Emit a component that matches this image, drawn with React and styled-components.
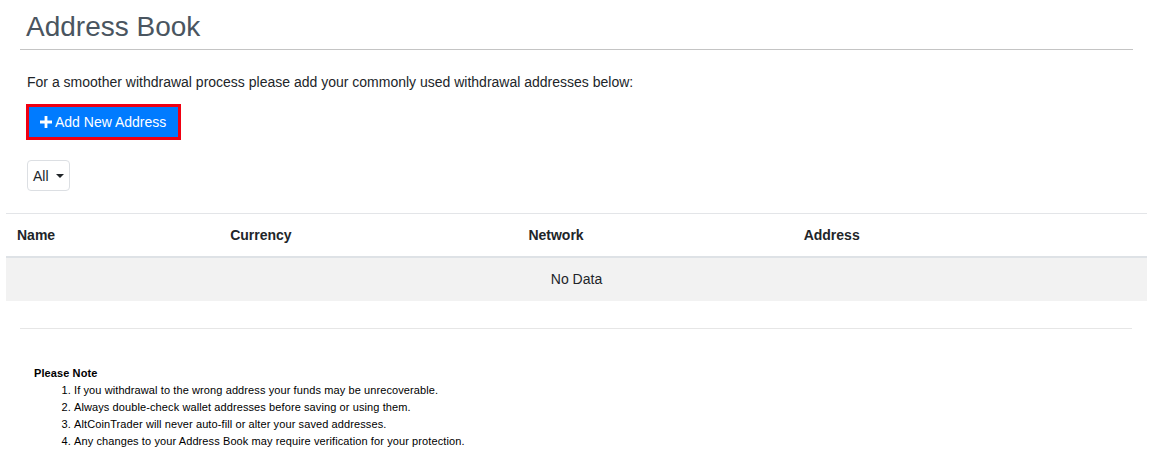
import styled, { createGlobalStyle } from "styled-components";

const GlobalStyle = createGlobalStyle`
  body {
    margin: 0;
    background: #fff;
    font-family: "Liberation Sans", Arial, sans-serif;
    color: #212529;
  }
`;

const Page = styled.div`
  padding: 10px 6px 20px;
`;

const Header = styled.div`
  margin: 0 14px;
  border-bottom: 1px solid #c4c4c4;
  padding-bottom: 5px;
`;

const Title = styled.h1`
  margin: 0;
  padding-left: 6px;
  font-size: 28px;
  font-weight: 400;
  line-height: 34px;
  color: #4a5560;
`;

const Intro = styled.p`
  margin: 22px 0 0 21px;
  font-size: 14px;
  line-height: 20px;
`;

const AddButton = styled.button`
  display: flex;
  align-items: center;
  gap: 3px;
  margin: 12px 0 0 20px;
  height: 36px;
  padding: 0 12px 0 11px;
  background: #007bff;
  color: #fff;
  border: 3px solid #f00012;
  font-family: inherit;
  font-size: 14px;
  cursor: pointer;
`;

const Filter = styled.div`
  display: inline-flex;
  align-items: center;
  gap: 7px;
  margin: 20px 0 0 21px;
  height: 31px;
  padding: 0 5px;
  box-sizing: border-box;
  border: 1px solid #dcdfe3;
  border-radius: 4px;
  font-size: 14px;
  color: #212529;
`;

const Caret = styled.span`
  width: 0;
  height: 0;
  border-left: 4px solid transparent;
  border-right: 4px solid transparent;
  border-top: 4px solid #212529;
`;

const Table = styled.table`
  margin-top: 22px;
  width: 100%;
  border-collapse: collapse;
  font-size: 14px;
`;

const Th = styled.th`
  width: ${(p) => p.$w}px;
  height: 43px;
  padding: 0 11px;
  text-align: left;
  font-weight: 700;
  border-top: 1px solid #e3e5e8;
  border-bottom: 2px solid #dee2e6;
  box-sizing: border-box;
`;

const EmptyCell = styled.td`
  height: 41px;
  background: #f2f2f2;
  text-align: center;
  color: #212529;
`;

const Divider = styled.hr`
  margin: 27px 15px 0 14px;
  border: 0;
  border-top: 1px solid #e6e6e6;
`;

const Note = styled.div`
  margin: 36px 0 0 28px;
  font-size: 11px;
  line-height: 17px;
  letter-spacing: 0.1px;
  color: #000;
`;

const NoteTitle = styled.div`
  font-weight: 700;
`;

const NoteList = styled.ol`
  margin: 0;
  padding-left: 40px;
`;

const PlusIcon = () => (
  <svg width="12" height="12" viewBox="0 0 12 12">
    <path d="M4.6 0h2.8v4.6H12v2.8H7.4V12H4.6V7.4H0V4.6h4.6z" fill="#fff" />
  </svg>
);

const columns = [
  { label: "Name", w: 213 },
  { label: "Currency", w: 298 },
  { label: "Network", w: 275 },
  { label: "Address", w: 354 },
];

const notes = [
  "If you withdrawal to the wrong address your funds may be unrecoverable.",
  "Always double-check wallet addresses before saving or using them.",
  "AltCoinTrader will never auto-fill or alter your saved addresses.",
  "Any changes to your Address Book may require verification for your protection.",
];

export default function App() {
  return (
    <Page>
      <GlobalStyle />
      <Header>
        <Title>Address Book</Title>
      </Header>
      <Intro>
        For a smoother withdrawal process please add your commonly used withdrawal addresses below:
      </Intro>
      <AddButton>
        <PlusIcon />
        Add New Address
      </AddButton>
      <Filter>
        All
        <Caret />
      </Filter>
      <Table>
        <thead>
          <tr>
            {columns.map((c) => (
              <Th key={c.label} $w={c.w}>
                {c.label}
              </Th>
            ))}
          </tr>
        </thead>
        <tbody>
          <tr>
            <EmptyCell colSpan={4}>No Data</EmptyCell>
          </tr>
        </tbody>
      </Table>
      <Divider />
      <Note>
        <NoteTitle>Please Note</NoteTitle>
        <NoteList>
          {notes.map((n) => (
            <li key={n}>{n}</li>
          ))}
        </NoteList>
      </Note>
    </Page>
  );
}
